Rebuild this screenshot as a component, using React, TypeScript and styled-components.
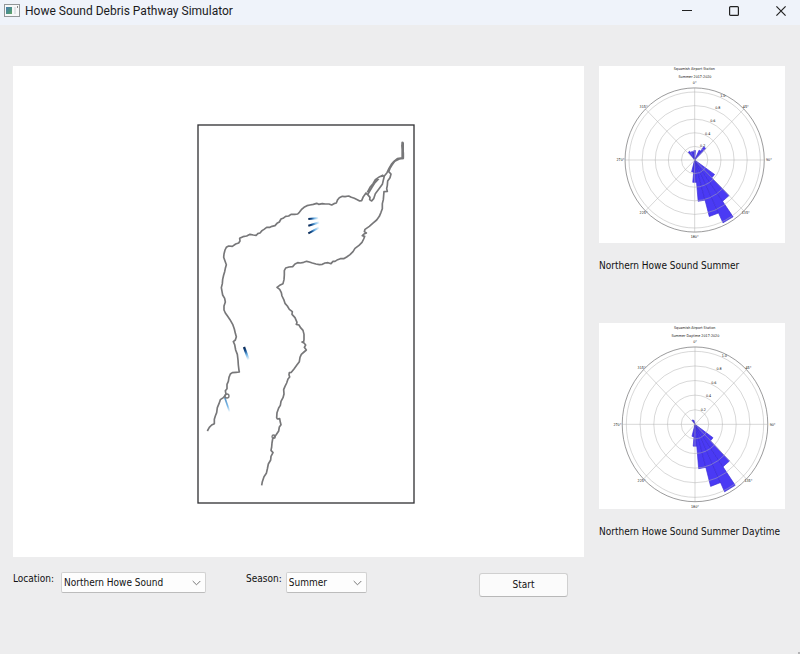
import React, { useState } from "react";
import styled, { createGlobalStyle } from "styled-components";

const GlobalStyle = createGlobalStyle`
  * { box-sizing: border-box; }
  body {
    margin: 0;
    background: #ededee;
    color: #111;
    font: 10px/14px "DejaVu Sans Condensed", "DejaVu Sans", sans-serif;
    font-stretch: condensed;
  }
`;

const Window = styled.div`
  min-height: 100vh;
  display: flex;
  flex-direction: column;
`;

const TitleBar = styled.header`
  display: flex;
  align-items: center;
  height: 25px;
  padding: 0 4px 4px 4px;
  background: #eff3fa;
`;

const Title = styled.h1`
  flex: 1;
  margin: 0 0 0 5px;
  font: 400 12px/20px Roboto, "Open Sans", sans-serif;
  color: #1b1b1d;
`;

const WindowButton = styled.button`
  display: grid;
  place-items: center;
  width: 31px;
  height: 20px;
  margin-left: 16px;
  padding: 0;
  border: 0;
  background: none;
`;

const Body = styled.main`
  display: flex;
  align-items: flex-start;
  gap: 15px;
  padding: 41px 15px 0 13px;
  flex: 1;
`;

const Workspace = styled.section`
  flex: 1;
  min-width: 0;
`;

const MapCanvas = styled.div`
  display: flex;
  justify-content: center;
  padding: 58px 0 53px 15px;
  background: #fff;

  svg { display: block; }
`;

const Controls = styled.form`
  display: flex;
  align-items: flex-start;
  gap: 40px;
  padding: 15px 16px 0 0;
`;

const Field = styled.div<{ $gap: number }>`
  display: flex;
  align-items: flex-start;
  gap: ${(p) => p.$gap}px;
`;

const SelectBox = styled.div<{ $width: number }>`
  display: grid;
  align-items: center;
  width: ${(p) => p.$width}px;

  > * { grid-area: 1 / 1; }
  svg { justify-self: end; margin-right: 5px; pointer-events: none; }
`;

const Select = styled.select`
  appearance: none;
  width: 100%;
  height: 21px;
  padding: 0 18px 0 2px;
  border: 1px solid #d2d2d2;
  border-bottom-color: #bcbcbc;
  border-radius: 2px;
  background: #fdfdfd;
  color: inherit;
  font: inherit;
  font-stretch: inherit;
`;

const StartButton = styled.button`
  width: 89px;
  height: 24px;
  margin: 1px 0 0 auto;
  border: 1px solid #d0d0d0;
  border-bottom-color: #b8b8b8;
  border-radius: 3px;
  background: #fbfbfb;
  color: inherit;
  font: inherit;
  font-stretch: inherit;
`;

const Roses = styled.aside`
  display: flex;
  flex-direction: column;
  gap: 50px;
  width: 186px;
`;

const Figure = styled.figure`
  margin: 0;

  svg { display: block; background: #fff; }
`;

const Caption = styled.figcaption`
  margin-top: 16px;
  white-space: nowrap;
`;

const Grip = styled.div`
  align-self: flex-end;
  width: 2px;
  height: 2px;
  background: #b4b4b6;
`;

const Chevron = () => (
  <svg width="9" height="6" viewBox="0 0 9 6" fill="none" stroke="#777" aria-hidden="true">
    <path d="M.7 1 4.5 4.8 8.3 1" />
  </svg>
);

type FieldProps = { id: string; label: string; options: string[]; width: number; gap: number };

function SelectField({ id, label, options, width, gap }: FieldProps) {
  const [value, setValue] = useState(options[0]);
  return (
    <Field $gap={gap}>
      <label htmlFor={id}>{label}</label>
      <SelectBox $width={width}>
        <Select id={id} value={value} onChange={(e) => setValue(e.target.value)}>
          {options.map((o) => <option key={o}>{o}</option>)}
        </Select>
        <Chevron />
      </SelectBox>
    </Field>
  );
}

const WEST_SHORE =
  "M637 80 638 87 636 92 638 101 640 114 640 130 632 129 622 131 612 139 604 148 597 160 591 173 583 183 577 208 566 223 556 236 551 251 545 258 539 254 540 247 533 239 528 234 520 245 515 257 509 258 502 254 493 250 484 247 476 243 465 245 457 244 448 248 443 254 439 264 432 266 425 270 417 267 406 267 397 266 386 268 380 265 370 268 360 270 351 272 342 277 334 284 328 292 323 297 314 298 303 298 296 303 287 304 279 310 273 312 268 321 261 325 255 332 246 334 240 337 230 337 222 343 216 347 210 354 203 356 199 361 190 360 180 358 170 363 159 365 149 370 150 378 146 384 137 387 127 394 116 393 109 397 105 405 102 417 101 427 105 438 109 449 106 460 104 470 101 480 98 493 97 506 94 518 96 529 98 540 104 550 106 561 102 573 102 585 106 594 113 604 120 614 128 628 133 642 136 655 139 665 136 675 130 680 134 689 137 705 142 718 144 735 145 750 147 766 148 771 138 772 127 773 121 777 117 787 115 799 111 808 111 821 106 827 108 838 100 848 91 854 87 866 82 878 80 893 76 903 73 913 73 926 65 930 58 937 52 948";

const EAST_SHORE =
  "M640 130 628 132 614 139 606 150 600 160 596 170 603 177 600 188 593 198 592 211 590 221 592 229 582 230 581 241 580 254 577 266 577 281 573 292 568 304 560 315 548 325 538 334 525 343 523 350 529 354 522 357 517 362 524 364 521 372 516 382 507 391 495 400 489 410 480 419 470 426 461 431 451 431 443 434 435 439 429 439 423 446 414 443 405 444 397 448 388 449 378 447 367 444 358 441 350 439 341 442 331 444 323 443 315 447 308 455 297 456 287 459 283 467 283 480 282 494 279 506 269 511 261 517 269 523 274 533 276 543 281 553 285 565 292 573 298 583 307 590 306 598 315 608 321 622 319 628 327 630 331 637 339 646 342 658 342 674 341 680 336 681 342 684 347 690 343 697 349 705 342 711 334 718 330 727 328 740 320 751 312 762 304 772 298 773 297 779 299 786 294 792 290 804 285 814 281 824 282 837 279 848 273 859 271 871 266 879 261 893 260 908 262 912 269 911 271 922 273 929 268 936 266 948 258 960 248 972 246 984 245 996 243 1006 249 1013 243 1024 242 1035 235 1047 232 1062 229 1075 222 1085 217 1100 215 1111";

const TRAILS = [
  { x1: 355, y1: 312, x2: 386, y2: 309, w: 6 },
  { x1: 355, y1: 332, x2: 389, y2: 322, w: 6 },
  { x1: 355, y1: 355, x2: 388, y2: 337, w: 6 },
  { x1: 162, y1: 696, x2: 176, y2: 735, w: 7 },
  { x1: 104, y1: 847, x2: 119, y2: 891, w: 5 },
];

function DriftMap() {
  return (
    <svg width="218" height="380" viewBox="21 27 654 1140" fill="none" role="img" aria-label="Howe Sound drift map">
      <defs>
        {TRAILS.map((t, i) => (
          <linearGradient key={i} id={`trail${i}`} gradientUnits="userSpaceOnUse" x1={t.x1} y1={t.y1} x2={t.x2} y2={t.y2}>
            <stop offset="0" stopColor={i === 4 ? "#4e8fc4" : "#08244f"} />
            <stop offset=".3" stopColor={i === 4 ? "#6ba5d4" : "#124f91"} />
            <stop offset=".6" stopColor="#77b8e8" />
            <stop offset="1" stopColor="#fff" />
          </linearGradient>
        ))}
      </defs>
      <rect x="24" y="30" width="648" height="1134" stroke="#333337" strokeWidth="4" />
      {TRAILS.map((t, i) => (
        <line key={i} x1={t.x1} y1={t.y1} x2={t.x2} y2={t.y2} stroke={`url(#trail${i})`} strokeWidth={t.w} />
      ))}
      <g stroke="#777779" strokeWidth="5" strokeLinejoin="round">
        <path d={WEST_SHORE} />
        <path d={EAST_SHORE} />
        <path d="M580 180 569 185 556 194 549 206 540 217 532 232M583 183 571 184M533 239 546 217 555 203 567 190" />
        <circle cx="111" cy="843" r="6" strokeWidth="4" />
        <circle cx="251" cy="965" r="5" strokeWidth="4" />
      </g>
      <path d="M638 82V130" stroke="#777779" strokeWidth="8" />
    </svg>
  );
}

type Bar = [bearing: number, value: number];
type RoseProps = {
  height: number; subtitle: string; cx: number; cy: number;
  rx: number; ry: number; titleY: number; bars: Bar[];
};

// Bearings run clockwise from north; the outer rim lies just past the 1.0 ring.
function WindRose({ height, subtitle, cx, cy, rx, ry, titleY, bars }: RoseProps) {
  const at = (deg: number, r: number): [number, number] => {
    const a = (deg * Math.PI) / 180;
    return [cx + Math.sin(a) * r * rx, cy - Math.cos(a) * r * ry];
  };
  const rim = 1.06;
  return (
    <svg width="186" height={height / 3} viewBox={`0 0 558 ${height}`} role="img" aria-label={subtitle}
      fontFamily='"DejaVu Sans", sans-serif' fontSize="11" textAnchor="middle" fill="#111">
      {bars.map(([deg, v]) => (
        <polygon key={deg} points={[at(deg, 0), at(deg - 5, v), at(deg + 5, v)].join(" ")} fill="#4a3af4" stroke="#3a2ad8" strokeWidth="2" strokeLinejoin="round" />
      ))}
      <g fill="none" stroke="#b0b0b0" strokeOpacity=".75" strokeWidth="2">
        {[0.2, 0.4, 0.6, 0.8, 1].map((r) => <ellipse key={r} cx={cx} cy={cy} rx={rx * r} ry={ry * r} />)}
        {[0, 45, 90, 135].map((d) => {
          const [x1, y1] = at(d, rim);
          const [x2, y2] = at(d + 180, rim);
          return <line key={d} x1={x1} y1={y1} x2={x2} y2={y2} />;
        })}
      </g>
      <ellipse cx={cx} cy={cy} rx={rx * rim} ry={ry * rim} fill="none" stroke="#68686a" strokeWidth="2" />
      <text x={cx - 1} y={titleY}>Squamish Airport Station</text>
      <text x={cx + 1} y={titleY + 25}>{subtitle}</text>
      {[0, 45, 90, 135, 180, 225, 270, 315].map((d) => {
        const [x, y] = at(d, d % 90 === 0 ? 1.13 : 1.1);
        return <text key={d} x={x} y={y + 4}>{d}°</text>;
      })}
      {[0.2, 0.4, 0.6, 0.8, 1].map((r) => {
        const [x, y] = at(22.5, r);
        return <text key={r} x={x + 9} y={y - 1}>{r.toFixed(1)}</text>;
      })}
    </svg>
  );
}

const SUMMER: Bar[] = [
  [190, 0.18], [180, 0.33], [170, 0.61], [160, 0.86], [150, 1.02], [140, 0.74], [130, 0.37],
  [40, 0.24], [30, 0.16], [0, 0.14], [350, 0.12], [340, 0.13], [325, 0.15],
];
const DAYTIME: Bar[] = [
  [190, 0.17], [180, 0.3], [170, 0.61], [160, 0.88], [150, 1.02], [140, 0.71], [130, 0.32],
  [340, 0.06], [325, 0.07],
];

export default function App() {
  return (
    <Window>
      <GlobalStyle />
      <TitleBar>
        <svg width="16" height="13" viewBox="0 0 16 13" aria-hidden="true">
          <defs>
            <linearGradient id="appIcon" x2="1" y2="1">
              <stop offset="0" stopColor="#4a7db0" />
              <stop offset=".6" stopColor="#4c9484" />
              <stop offset="1" stopColor="#67a865" />
            </linearGradient>
          </defs>
          <rect x=".5" y=".5" width="15" height="12" fill="#f7f8f9" stroke="#929799" />
          <rect x="2" y="3" width="6" height="7" fill="url(#appIcon)" />
          <path d="M10 3h2v7h-2z" fill="#e0e4e7" />
          <path d="M13 2h1v2h-1z" fill="#888" />
        </svg>
        <Title>Howe Sound Debris Pathway Simulator</Title>
        <WindowButton aria-label="Minimize">
          <svg width="10" height="10" viewBox="0 0 10 10" stroke="#222"><path d="M0 4.5h10" /></svg>
        </WindowButton>
        <WindowButton aria-label="Maximize">
          <svg width="10" height="10" viewBox="0 0 10 10" fill="none" stroke="#222" strokeWidth="1.2"><rect x=".6" y=".6" width="8.8" height="8.8" rx="1" /></svg>
        </WindowButton>
        <WindowButton aria-label="Close">
          <svg width="10" height="10" viewBox="0 0 10 10" stroke="#222" strokeWidth="1.2"><path d="m.4.4 9.2 9.2m0-9.2L.4 9.6" /></svg>
        </WindowButton>
      </TitleBar>
      <Body>
        <Workspace>
          <MapCanvas><DriftMap /></MapCanvas>
          <Controls onSubmit={(e) => e.preventDefault()}>
            <SelectField id="location" label="Location:" width={145} gap={7} options={["Northern Howe Sound", "Southern Howe Sound"]} />
            <SelectField id="season" label="Season:" width={81} gap={4} options={["Summer", "Winter"]} />
            <StartButton type="submit">Start</StartButton>
          </Controls>
        </Workspace>
        <Roses>
          <Figure>
            <WindRose height={531} subtitle="Summer 2017-2020" cx={287} cy={282} rx={197} ry={204} titleY={11} bars={SUMMER} />
            <Caption>Northern Howe Sound Summer</Caption>
          </Figure>
          <Figure>
            <WindRose height={558} subtitle="Summer Daytime 2017-2020" cx={288} cy={304} rx={206} ry={219} titleY={17} bars={DAYTIME} />
            <Caption>Northern Howe Sound Summer Daytime</Caption>
          </Figure>
        </Roses>
      </Body>
      <Grip />
    </Window>
  );
}
